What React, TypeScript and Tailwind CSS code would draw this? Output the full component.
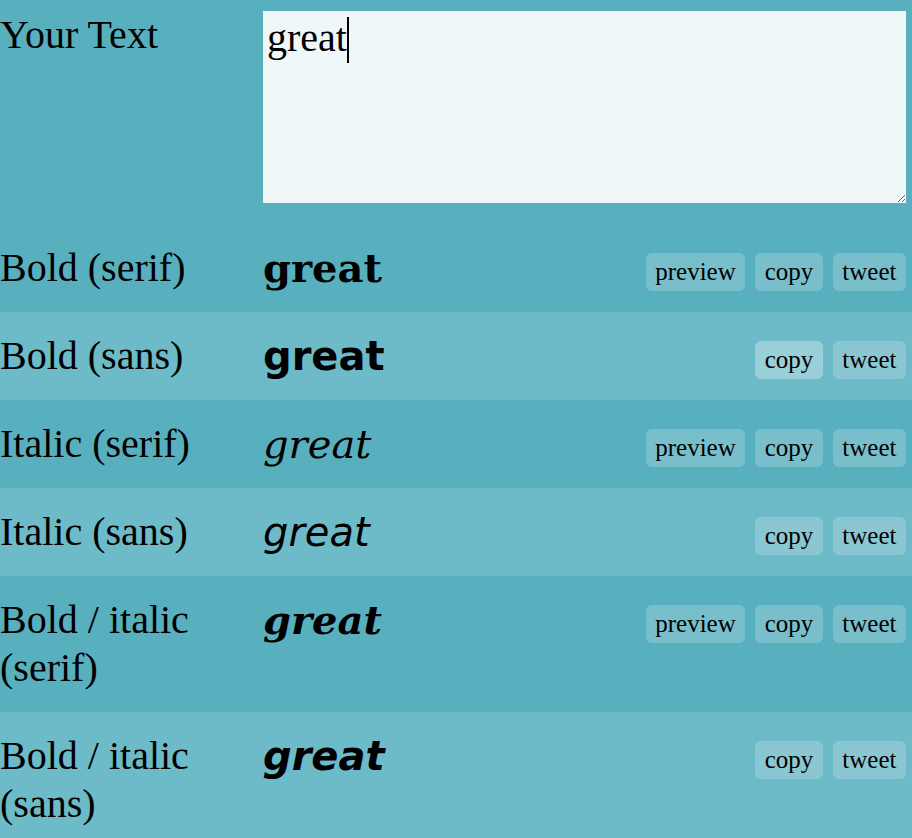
import React, { useEffect, useRef, useState } from 'react';

type Style = {
    label: string;
    cls: string;
    preview: boolean;
};

// each row shows the typed text in its own face
const styles: Style[] = [
    { label: 'Bold (serif)', cls: "font-['DejaVu_Serif',serif] font-bold", preview: true },
    { label: 'Bold (sans)', cls: "font-['DejaVu_Sans',sans-serif] font-bold", preview: false },
    { label: 'Italic (serif)', cls: "font-['DejaVu_Serif',serif] italic", preview: true },
    { label: 'Italic (sans)', cls: "font-['DejaVu_Sans',sans-serif] italic", preview: false },
    { label: 'Bold / italic (serif)', cls: "font-['DejaVu_Serif',serif] font-bold italic", preview: true },
    { label: 'Bold / italic (sans)', cls: "font-['DejaVu_Sans',sans-serif] font-bold italic", preview: false },
];

const App: React.FC = () => {
    const [value, setValue] = useState('great');
    const ref = useRef<HTMLTextAreaElement>(null);

    useEffect(() => {
        const el = ref.current;
        if (el) {
            el.focus();
            el.setSelectionRange(el.value.length, el.value.length);
        }
    }, []);

    return (
        <div className="min-h-screen bg-[#58b0bf] font-['Liberation_Serif',serif] text-[40px] leading-[48px] text-black">
            <div className="flex pt-[11px] pb-[21px] pr-[6px]">
                <div className="w-[263px] shrink-0">Your Text</div>
                <div className="relative h-[192px] flex-1">
                    <textarea
                        ref={ref}
                        value={value}
                        onChange={(e) => setValue(e.target.value)}
                        className="block h-full w-full bg-[#f0f7f9] px-[4px] py-[3px] text-[40px] leading-[48px] text-black caret-transparent outline-none"
                    />
                    {/* drawn caret, sits right after the typed text */}
                    <div className="pointer-events-none absolute left-0 top-0 px-[4px] py-[3px] whitespace-pre-wrap">
                        <span className="invisible">{value}</span>
                        <span className="inline-block h-[46px] w-[2px] translate-y-[1px] bg-black align-[-11px]" />
                    </div>
                </div>
            </div>

            {styles.map((s, i) => (
                <div
                    key={s.label}
                    className={
                        'flex items-start py-[20px] pr-[6px] ' +
                        (i % 2 === 1 ? 'bg-[#6dbac8]' : 'bg-[#58b0bf]')
                    }
                >
                    <div className="w-[263px] shrink-0">{s.label}</div>
                    <div className={'flex-1 ' + s.cls}>{value}</div>
                    <div className="mt-[9px] flex gap-[10px] text-[25px] leading-[28px]">
                        {s.preview && (
                            <button className="rounded-[6px] bg-white/20 px-[9.5px] py-[5px]">preview</button>
                        )}
                        <button
                            className={
                                'rounded-[6px] px-[9.5px] py-[5px] ' +
                                (i === 1 ? 'bg-white/30' : 'bg-white/20')
                            }
                        >
                            copy
                        </button>
                        <button className="rounded-[6px] bg-white/20 px-[9.5px] py-[5px]">tweet</button>
                    </div>
                </div>
            ))}
        </div>
    );
};

export default App;
